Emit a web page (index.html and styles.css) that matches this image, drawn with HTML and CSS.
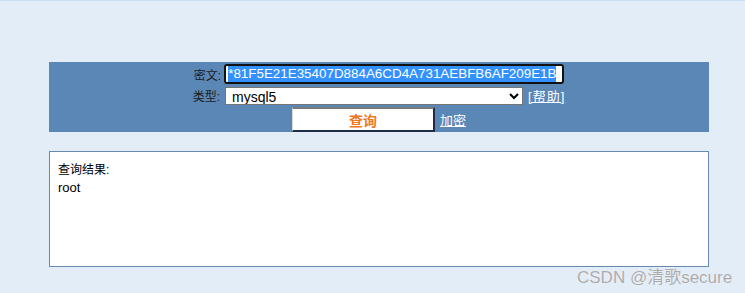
FILE: index.html
```html
<!DOCTYPE html>
<html lang="zh-CN">
<head>
	<meta http-equiv="Content-Type" content="text/html;charset=utf-8">
	<title>MD5 查询</title>
	<link rel="stylesheet" href="styles.css">
</head>
<body>

<div class="topline"></div>

<div class="panel">
	<form class="form" action="javascript:void(0);">
		<div class="row">
			<span class="label">密文:</span>
			<div class="cipher"><span class="sel">*81F5E21E35407D884A6CD4A731AEBFB6AF209E1B</span></div>
		</div>
		<div class="row">
			<span class="label">类型:</span>
			<select id="type" class="type">
				<option value="mysql5" selected="selected">mysql5</option>
				<option value="md5">md5</option>
				<option value="sha1">sha1</option>
			</select>
			<a href="#" class="help">[帮助]</a>
		</div>
		<div class="row row-btn">
			<button type="submit" class="query">查询</button>
			<a href="#" class="encrypt">加密</a>
		</div>
	</form>
</div>

<div class="result">
	<div>查询结果:</div>
	<div class="plain">root</div>
</div>

<div class="mark">CSDN @清歌secure</div>

</body>
</html>
```

FILE: styles.css
```css
body { margin: 0; padding: 0; background: #e3edf8; font-family: "Liberation Sans", "Noto Sans CJK SC", sans-serif; font-size: 12px; color: #000; }
.topline { height: 1px; background: #c9dcf2; }
.panel { margin: 61px 0 0 49px; width: 660px; height: 70px; background: #5b87b7; }
.form { display: flex; flex-direction: column; align-items: center; padding-top: 2px; }
.row { display: flex; align-items: center; }
.row + .row { margin-top: 2px; }
.label { color: #1c1c1c; font-size: 12px; margin-right: 3px; }
.cipher { width: 334px; height: 16px; background: #fff; border: 2px solid #111; border-radius: 3px; box-shadow: inset 0 0 0 1px #fff; display: flex; align-items: center; padding-left: 2px; overflow: hidden; }
.sel { background: #3390ff; color: #fff; font-size: 13.4px; line-height: 16px; white-space: nowrap; }
.type { width: 298px; height: 18px; font-family: "Liberation Sans", sans-serif; font-size: 14px; border: 1px solid #767676; border-radius: 0; background: #fff; padding: 0 2px; margin: 0 0 0 2px; }
.help { color: #fff; margin-left: 5px; font-size: 13px; letter-spacing: 1px; }
.row-btn { margin-top: 1px; align-items: flex-end; }
.query { width: 143px; height: 25px; background: #fff; border-style: solid; border-width: 2px 2px 2px 1px; border-color: #7a7a7a #1e2c48 #1e2c48 #d8d8d8; color: #f0781c; font-weight: bold; font-size: 14px; font-family: "Noto Sans CJK SC", sans-serif; padding: 0; margin: 0; }
.encrypt { color: #fff; font-size: 13px; margin: 0 0 3px 5px; }
.result { margin: 19px 0 0 49px; width: 650px; height: 98px; background: #fff; border: 1px solid #6889b0; padding: 10px 0 6px 8px; line-height: 17px; font-size: 12px; }
.plain { font-size: 13px; }
.mark { position: absolute; left: 577px; top: 263px; color: #ababab; font-size: 17px; font-family: "Liberation Sans", "Noto Sans CJK SC", sans-serif; text-shadow: 0 0 1px #fff; }
```
